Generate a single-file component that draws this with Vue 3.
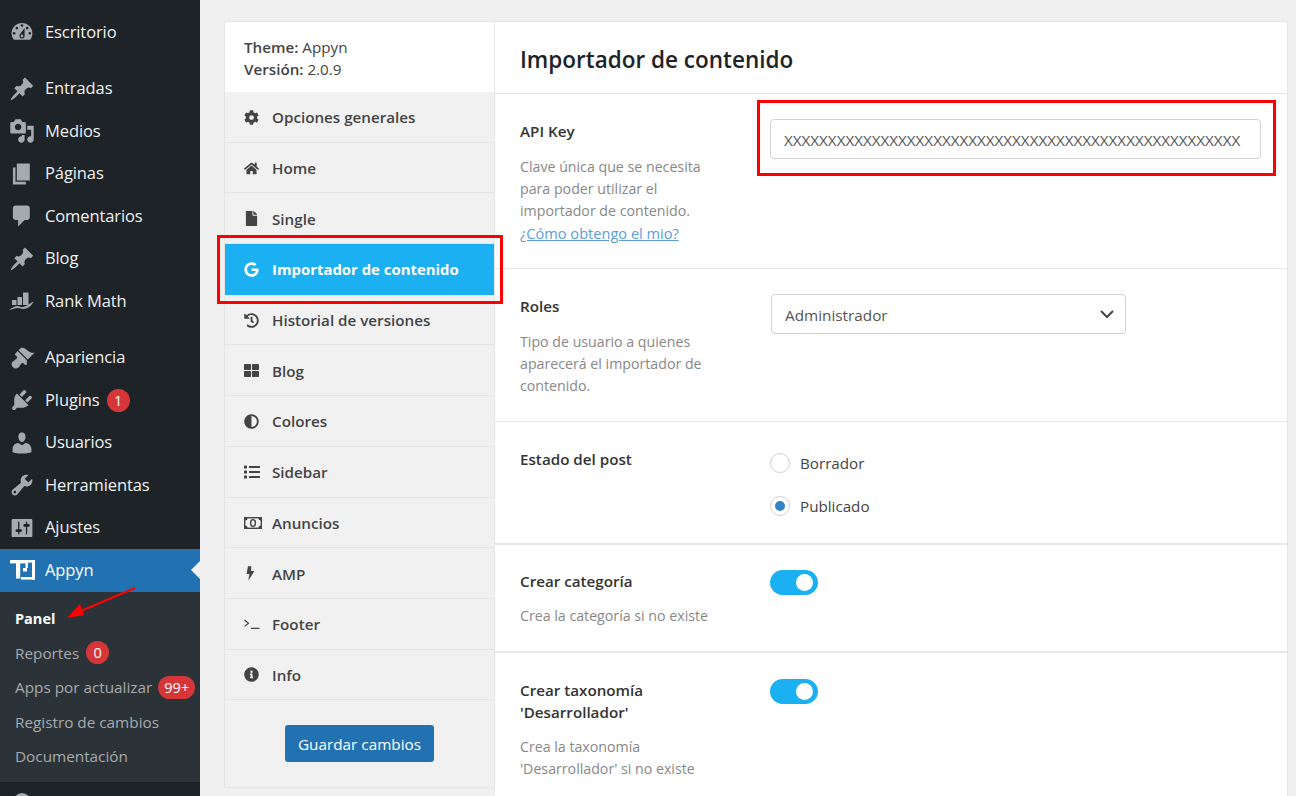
<script setup>
const dash = {
  dashboard: 'M3.76 16h12.48c1.1-1.37 1.76-3.11 1.76-5 0-4.42-3.58-8-8-8s-8 3.58-8 8c0 1.89.66 3.63 1.76 5zM10 4c.55 0 1 .45 1 1s-.45 1-1 1-1-.45-1-1 .45-1 1-1zM6 6c.55 0 1 .45 1 1s-.45 1-1 1-1-.45-1-1 .45-1 1-1zm8 0c.55 0 1 .45 1 1s-.45 1-1 1-1-.45-1-1 .45-1 1-1zm-5.37 5.55L12 7v6c0 1.1-.9 2-2 2s-2-.9-2-2c0-.57.24-1.08.63-1.45zM4 10c.55 0 1 .45 1 1s-.45 1-1 1-1-.45-1-1 .45-1 1-1zm12 0c.55 0 1 .45 1 1s-.45 1-1 1-1-.45-1-1 .45-1 1-1zm-5 3c0-.55-.45-1-1-1s-1 .45-1 1 .45 1 1 1 1-.45 1-1z',
  pin: 'M10.44 3.02l1.82-1.82 6.36 6.35-1.83 1.82c-1.05-.68-2.48-.57-3.41.36l-.75.75c-.92.93-1.04 2.35-.35 3.41l-1.83 1.82-2.41-2.41-2.8 2.79c-.42.42-3.38 2.71-3.8 2.29s1.86-3.39 2.28-3.81l2.79-2.79L4.1 9.36l1.83-1.82c1.05.69 2.48.57 3.4-.36l.75-.75c.93-.92 1.05-2.35.36-3.41z',
  media: 'M13 11V4c0-.55-.45-1-1-1h-1.67L9 1H5L3.67 3H2c-.55 0-1 .45-1 1v7c0 .55.45 1 1 1h10c.55 0 1-.45 1-1zM7 4.5c1.38 0 2.5 1.12 2.5 2.5S8.38 9.5 7 9.5 4.5 8.38 4.5 7 5.62 4.5 7 4.5zM14 6h5v10.5c0 1.38-1.12 2.5-2.5 2.5S14 17.88 14 16.5s1.12-2.5 2.5-2.5c.17 0 .34.02.5.05V9h-3V6zm-4 8.05V13h2v3.5c0 1.38-1.12 2.5-2.5 2.5S7 17.88 7 16.5 8.12 14 9.5 14c.17 0 .34.02.5.05z',
  page: 'M6 15V2h10v13H6zm-1 1h8v2H3V5h2v11z',
  comment: 'M5 2h9c1.1 0 2 .9 2 2v7c0 1.1-.9 2-2 2h-2l-5 5v-5H5c-1.1 0-2-.9-2-2V4c0-1.1.9-2 2-2z',
  brush: 'M14.48 11.06L7.41 3.99l1.5-1.5c.5-.56 2.3-.47 3.51.32 1.21.8 1.43 1.28 2.91 2.1 1.18.64 2.45 1.26 4.45.85zm-.71.71L6.7 4.7 4.93 6.47c-.39.39-.39 1.02 0 1.41l1.06 1.06c.39.39.39 1.03 0 1.42-.6.6-1.43 1.11-2.21 1.69-.35.26-.7.53-1.01.84-1.43 1.43-.67 3.2.29 4.16.96.96 2.73 1.72 4.16.29.31-.31.58-.66.84-1.01.58-.78 1.09-1.61 1.69-2.21.39-.39 1.03-.39 1.42 0l1.06 1.06c.39.39 1.02.39 1.41 0z',
  plugin: 'M13.11 4.36L9.87 7.6 8 5.73l3.24-3.24c.35-.34 1.05-.2 1.56.32.52.51.66 1.21.31 1.55zm-8 1.77l.91-1.12 9.01 9.01-1.19.84c-.71.71-2.63 1.16-3.82 1.16H6.14L4.9 17.26c-.59.59-1.54.59-2.12 0-.59-.58-.59-1.53 0-2.12l1.24-1.24v-3.88c0-1.13.4-3.19 1.09-3.89zm7.26 3.97l3.24-3.24c.34-.35 1.04-.21 1.55.31.52.51.66 1.21.31 1.55l-3.24 3.25z',
  users: 'M10 9.25c-2.27 0-2.73-3.44-2.73-3.44C7 4.02 7.82 2 9.97 2c2.16 0 2.98 2.02 2.71 3.81 0 0-.41 3.44-2.68 3.44zm0 2.57L12.72 10c2.39 0 4.52 2.33 4.52 4.53v2.49s-3.65 1.13-7.24 1.13c-3.65 0-7.24-1.13-7.24-1.13v-2.49c0-2.25 1.94-4.48 4.47-4.48z',
  tools: 'M16.68 9.77c-1.34 1.34-3.3 1.67-4.95.99l-5.41 6.52c-.99.99-2.59.99-3.58 0s-.99-2.59 0-3.57l6.52-5.42c-.68-1.65-.35-3.61.99-4.95 1.28-1.28 3.12-1.62 4.72-1.06l-2.89 2.89 2.82 2.82 2.86-2.87c.53 1.58.18 3.39-1.08 4.65zM3.81 16.21c.4.39 1.04.39 1.43 0 .4-.4.4-1.04 0-1.43-.39-.4-1.03-.4-1.43 0-.39.39-.39 1.03 0 1.43z',
  settings: 'M18 16V4c0-.55-.45-1-1-1H3c-.55 0-1 .45-1 1v12c0 .55.45 1 1 1h14c.55 0 1-.45 1-1zM8 11h1c.55 0 1 .45 1 1s-.45 1-1 1H8v1.5c0 .28-.22.5-.5.5s-.5-.22-.5-.5V13H6c-.55 0-1-.45-1-1s.45-1 1-1h1V5.5c0-.28.22-.5.5-.5s.5.22.5.5V11zm5-2h-1c-.55 0-1-.45-1-1s.45-1 1-1h1V5.5c0-.28.22-.5.5-.5s.5.22.5.5V7h1c.55 0 1 .45 1 1s-.45 1-1 1h-1v5.5c0 .28-.22.5-.5.5s-.5-.22-.5-.5V9z'
}

const menuGroups = [
  [{ label: 'Escritorio', icon: dash.dashboard }],
  [
    { label: 'Entradas', icon: dash.pin },
    { label: 'Medios', icon: dash.media },
    { label: 'Páginas', icon: dash.page },
    { label: 'Comentarios', icon: dash.comment },
    { label: 'Blog', icon: dash.pin },
    { label: 'Rank Math', rank: true }
  ],
  [
    { label: 'Apariencia', icon: dash.brush },
    { label: 'Plugins', icon: dash.plugin, badge: '1' },
    { label: 'Usuarios', icon: dash.users },
    { label: 'Herramientas', icon: dash.tools },
    { label: 'Ajustes', icon: dash.settings }
  ]
]

const submenu = [
  { label: 'Panel', current: true },
  { label: 'Reportes', badge: '0' },
  { label: 'Apps por actualizar', badge: '99+' },
  { label: 'Registro de cambios' },
  { label: 'Documentación' }
]

const tabs = [
  { label: 'Opciones generales', vb: '0 0 512 512', d: 'M487.4 315.7l-42.6-24.6c4.3-23.2 4.3-47 0-70.2l42.6-24.6c4.9-2.8 7.1-8.6 5.5-14-11.1-35.6-30-67.8-54.7-94.6-3.8-4.1-10-5.1-14.8-2.3L380.8 110c-17.9-15.4-38.5-27.3-60.8-35.1V25.8c0-5.6-3.9-10.5-9.4-11.7-36.7-8.2-74.3-7.8-109.2 0-5.5 1.2-9.4 6.1-9.4 11.7V75c-22.2 7.9-42.8 19.8-60.8 35.1L88.7 85.5c-4.9-2.8-11-1.9-14.8 2.3-24.7 26.7-43.6 58.9-54.7 94.6-1.7 5.4.6 11.2 5.5 14L67.3 221c-4.3 23.2-4.3 47 0 70.2l-42.6 24.6c-4.9 2.8-7.1 8.6-5.5 14 11.1 35.6 30 67.8 54.7 94.6 3.8 4.1 10 5.1 14.8 2.3l42.6-24.6c17.9 15.4 38.5 27.3 60.8 35.1v49.2c0 5.6 3.9 10.5 9.4 11.7 36.7 8.2 74.3 7.8 109.2 0 5.5-1.2 9.4-6.1 9.4-11.7v-49.2c22.2-7.9 42.8-19.8 60.8-35.1l42.6 24.6c4.9 2.8 11 1.9 14.8-2.3 24.7-26.7 43.6-58.9 54.7-94.6 1.5-5.5-.7-11.3-5.6-14.1zM256 336c-44.1 0-80-35.9-80-80s35.9-80 80-80 80 35.9 80 80-35.9 80-80 80z' },
  { label: 'Home', vb: '0 0 576 512', d: 'M280.37 148.26L96 300.11V464a16 16 0 0 0 16 16l112.06-.29a16 16 0 0 0 15.92-16V368a16 16 0 0 1 16-16h64a16 16 0 0 1 16 16v95.64a16 16 0 0 0 16 16.05L464 480a16 16 0 0 0 16-16V300L295.67 148.26a12.19 12.19 0 0 0-15.3 0zM571.6 251.47L488 182.56V44.05a12 12 0 0 0-12-12h-56a12 12 0 0 0-12 12v72.61L318.47 43a48 48 0 0 0-61 0L4.34 251.47a12 12 0 0 0-1.6 16.9l25.5 31A12 12 0 0 0 45.15 301l235.22-193.74a12.19 12.19 0 0 1 15.3 0L530.9 301a12 12 0 0 0 16.9-1.6l25.5-31a12 12 0 0 0-1.7-16.93z' },
  { label: 'Single', vb: '0 0 384 512', d: 'M224 136V0H24C10.7 0 0 10.7 0 24v464c0 13.3 10.7 24 24 24h336c13.3 0 24-10.7 24-24V160H248c-13.2 0-24-10.8-24-24zm160-14.1v6.1H256V0h6.1c6.4 0 12.5 2.5 17 7l97.9 98c4.5 4.5 7 10.6 7 16.9z' },
  { label: 'Importador de contenido', active: true, vb: '0 0 488 512', d: 'M488 261.8C488 403.3 391.1 504 248 504 110.8 504 0 393.2 0 256S110.8 8 248 8c66.8 0 123 24.5 166.3 64.9l-67.5 64.9C258.5 52.6 94.3 116.6 94.3 256c0 86.5 69.1 156.6 153.7 156.6 98.2 0 135-70.4 140.8-106.9H248v-85.3h236.1c2.3 12.7 3.9 24.9 3.9 41.4z' },
  { label: 'Historial de versiones', vb: '0 0 512 512', d: 'M504 255.531c.253 136.64-111.18 248.372-247.82 248.468-59.015.042-113.223-20.53-155.822-54.911-11.077-8.94-11.905-25.541-1.839-35.607l11.267-11.267c8.609-8.609 22.353-9.551 31.891-1.984C173.062 425.135 212.781 440 256 440c101.705 0 184-82.311 184-184 0-101.705-82.311-184-184-184-48.814 0-93.149 18.969-126.068 49.932l50.754 50.754c10.08 10.08 2.941 27.314-11.313 27.314H24c-8.837 0-16-7.163-16-16V38.627c0-14.254 17.234-21.393 27.314-11.314l49.372 49.372C129.209 34.136 189.552 8 256 8c136.81 0 247.747 110.78 248 247.531zm-180.912 78.784l9.823-12.63c8.138-10.463 6.253-25.542-4.21-33.679L288 256.349V152c0-13.255-10.745-24-24-24h-16c-13.255 0-24 10.745-24 24v135.651l65.409 50.874c10.463 8.137 25.541 6.253 33.679-4.21z' },
  { label: 'Blog', vb: '0 0 512 512', d: 'M296 32h192c13.255 0 24 10.745 24 24v160c0 13.255-10.745 24-24 24H296c-13.255 0-24-10.745-24-24V56c0-13.255 10.745-24 24-24zm-80 0H24C10.745 32 0 42.745 0 56v160c0 13.255 10.745 24 24 24h192c13.255 0 24-10.745 24-24V56c0-13.255-10.745-24-24-24zM0 296v160c0 13.255 10.745 24 24 24h192c13.255 0 24-10.745 24-24V296c0-13.255-10.745-24-24-24H24c-13.255 0-24 10.745-24 24zm296 184h192c13.255 0 24-10.745 24-24V296c0-13.255-10.745-24-24-24H296c-13.255 0-24 10.745-24 24v160c0 13.255 10.745 24 24 24z' },
  { label: 'Colores', vb: '0 0 512 512', d: 'M8 256c0 136.966 111.033 248 248 248s248-111.034 248-248S392.966 8 256 8 8 119.033 8 256zm248 184V72c101.705 0 184 82.311 184 184 0 101.705-82.311 184-184 184z' },
  { label: 'Sidebar', vb: '0 0 512 512', d: 'M80 368H16a16 16 0 0 0-16 16v64a16 16 0 0 0 16 16h64a16 16 0 0 0 16-16v-64a16 16 0 0 0-16-16zm0-320H16A16 16 0 0 0 0 64v64a16 16 0 0 0 16 16h64a16 16 0 0 0 16-16V64a16 16 0 0 0-16-16zm0 160H16a16 16 0 0 0-16 16v64a16 16 0 0 0 16 16h64a16 16 0 0 0 16-16v-64a16 16 0 0 0-16-16zm416 176H176a16 16 0 0 0-16 16v32a16 16 0 0 0 16 16h320a16 16 0 0 0 16-16v-32a16 16 0 0 0-16-16zm0-320H176a16 16 0 0 0-16 16v32a16 16 0 0 0 16 16h320a16 16 0 0 0 16-16V80a16 16 0 0 0-16-16zm0 160H176a16 16 0 0 0-16 16v32a16 16 0 0 0 16 16h320a16 16 0 0 0 16-16v-32a16 16 0 0 0-16-16z', wide: true },
  { label: 'Anuncios', money: true },
  { label: 'AMP', vb: '0 0 320 512', d: 'M190 0L70 0 20 270h100L80 512 300 170H180z', narrow: true },
  { label: 'Footer', terminal: true },
  { label: 'Info', vb: '0 0 512 512', d: 'M256 8C119.043 8 8 119.083 8 256c0 136.997 111.043 248 248 248s248-111.003 248-248C504 119.083 392.957 8 256 8zm0 110c23.196 0 42 18.804 42 42s-18.804 42-42 42-42-18.804-42-42 18.804-42 42-42zm56 254c0 6.627-5.373 12-12 12h-88c-6.627 0-12-5.373-12-12v-24c0-6.627 5.373-12 12-12h12v-64h-12c-6.627 0-12-5.373-12-12v-24c0-6.627 5.373-12 12-12h64c6.627 0 12 5.373 12 12v100h12c6.627 0 12 5.373 12 12v24z' }
]

const apiKey = 'X'.repeat(52)
</script>

<template>
  <div class="page">
    <aside class="wpmenu">
      <ul v-for="(group, gi) in menuGroups" :key="gi" class="group">
        <li v-for="item in group" :key="item.label" class="item">
          <span class="slot">
            <svg v-if="item.rank" width="26" height="20" viewBox="0 0 26 20" fill="#a7aaad">
              <rect x="3" y="9" width="4.500" height="5" />
              <rect x="8.500" y="6" width="4.500" height="8" />
              <rect x="14" y="1.500" width="5.500" height="12.500" />
              <path d="M0 18.500c3-1 5-3.600 8-3.600 2.500 0 3.500 1.400 6 1.100 3.500-.4 6-3 10.500-5.500-1.500 4-5.500 7.400-10 7.400-2.500 0-3.500-1-6-1-3 0-5.500 2-8.500 1.600z" />
            </svg>
            <svg v-else width="26" height="26" viewBox="0 0 20 20" fill="#a7aaad"><path :d="item.icon" /></svg>
          </span>
          <span class="item-label">{{ item.label }}</span>
          <span v-if="item.badge" class="badge">{{ item.badge }}</span>
        </li>
      </ul>
      <div class="item current">
        <span class="slot">
          <svg width="26" height="21" viewBox="0 0 26 21" fill="#fff">
            <rect x="1" y="0" width="25" height="2.600" />
            <rect x="1" y="0" width="16" height="3.400" />
            <rect x="7" y="0" width="4.200" height="18.500" />
            <rect x="16.500" y="0" width="2.400" height="8" />
            <rect x="23" y="0" width="3" height="19.500" />
            <rect x="12" y="17" width="14" height="2.600" />
            <rect x="14" y="8" width="4" height="3.500" />
          </svg>
        </span>
        <span class="item-label">Appyn</span>
        <span class="notch"></span>
      </div>
      <ul class="submenu">
        <li v-for="s in submenu" :key="s.label" class="subitem" :class="{ on: s.current }">
          <span>{{ s.label }}</span>
          <span v-if="s.badge" class="badge" :class="{ wide: s.badge.length > 1 }">{{ s.badge }}</span>
        </li>
      </ul>
      <div class="tail"><span class="tail-dot"></span></div>
    </aside>

    <main class="content">
      <div class="card">
        <nav class="tabs">
          <div class="theme">
            <div><b>Theme:</b> Appyn</div>
            <div><b>Versión:</b> 2.0.9</div>
          </div>
          <div v-for="t in tabs" :key="t.label" class="tab" :class="{ active: t.active }">
            <span class="tab-icon">
              <svg v-if="t.money" width="18" height="12" viewBox="0 0 18 12">
                <rect x="0.700" y="0.700" width="16.600" height="10.600" fill="none" stroke="currentColor" stroke-width="1.400" />
                <path d="M1 1h2.500a2.500 2.500 0 0 1-2.500 2.500zM17 1h-2.500a2.500 2.500 0 0 0 2.500 2.500zM1 11h2.500a2.500 2.500 0 0 0-2.500-2.500zM17 11h-2.500a2.500 2.500 0 0 1 2.500-2.500z" fill="currentColor" />
                <ellipse cx="9" cy="6" rx="2.400" ry="3.400" fill="none" stroke="currentColor" stroke-width="1.400" />
              </svg>
              <svg v-else-if="t.terminal" width="16" height="10" viewBox="0 0 16 10" fill="none" stroke="currentColor" stroke-width="1.200">
                <path d="M0.500 1l4 3.200-4 3.200M7 9.300h8.500" />
              </svg>
              <svg v-else class="fa" :class="{ narrow: t.narrow, wide: t.wide }" :viewBox="t.vb" fill="currentColor"><path :d="t.d" /></svg>
            </span>
            <span class="tab-label">{{ t.label }}</span>
          </div>
          <div class="save"><button class="btn" type="button">Guardar cambios</button></div>
        </nav>

        <section class="panel">
          <h1 class="title">Importador de contenido</h1>

          <div class="row">
            <div class="info">
              <h3>API Key</h3>
              <p>Clave única que se necesita para poder utilizar el importador de contenido. <a href="#">¿Cómo obtengo el mio?</a></p>
            </div>
            <div class="field">
              <input class="input" type="text" :value="apiKey" />
            </div>
          </div>

          <div class="row row-roles">
            <div class="info">
              <h3>Roles</h3>
              <p>Tipo de usuario a quienes aparecerá el importador de contenido.</p>
            </div>
            <div class="field">
              <div class="select">
                <span class="select-value">Administrador</span>
                <svg width="14" height="9" viewBox="0 0 14 9" fill="none" stroke="#444" stroke-width="2"><path d="M1 1l6 6 6-6" /></svg>
              </div>
            </div>
          </div>

          <div class="row thick">
            <div class="info">
              <h3>Estado del post</h3>
            </div>
            <div class="field radios">
              <label class="radio"><span class="dot"></span>Borrador</label>
              <label class="radio"><span class="dot on"></span>Publicado</label>
            </div>
          </div>

          <div class="row thick switch compact">
            <div class="info">
              <h3>Crear categoría</h3>
              <p>Crea la categoría si no existe</p>
            </div>
            <div class="field"><span class="toggle"><span class="knob"></span></span></div>
          </div>

          <div class="row switch">
            <div class="info">
              <h3>Crear taxonomía 'Desarrollador'</h3>
              <p>Crea la taxonomía 'Desarrollador' si no existe</p>
            </div>
            <div class="field"><span class="toggle"><span class="knob"></span></span></div>
          </div>
        </section>
      </div>
    </main>

    <div class="mark mark-api"></div>
    <div class="mark mark-tab"></div>
    <svg class="arrow" width="80" height="40" viewBox="0 0 80 40">
      <path d="M75 1L16 26" stroke="#f00" stroke-width="2" fill="none" />
      <path d="M7 31l13-14 4 11z" fill="#f00" />
    </svg>
  </div>
</template>

<style>
html, body { margin: 0; background: #f0f0f1; }
</style>

<style scoped>
.page {
  position: relative;
  display: flex;
  height: 796px;
  overflow: hidden;
  background: #f0f0f1;
  font-family: "Open Sans", "Noto Sans", sans-serif;
  color: #444;
}
ul { list-style: none; margin: 0; padding: 0; }

.wpmenu {
  flex: 0 0 200px;
  display: flex;
  flex-direction: column;
  padding-top: 11px;
  box-sizing: border-box;
  background: #1d2327;
}
.group { margin-bottom: 14px; }
.group:nth-of-type(3) { margin-bottom: 0; }
.item {
  position: relative;
  display: flex;
  align-items: center;
  height: 42.500px;
  font-size: 16.500px;
  letter-spacing: -0.100px;
  color: #f0f0f1;
}
.item-label { padding-bottom: 2px; }
.slot {
  flex: 0 0 45px;
  box-sizing: border-box;
  padding-right: 1px;
  display: flex;
  justify-content: center;
  align-items: center;
}
.current { background: #2271b1; color: #fff; }
.notch {
  position: absolute;
  right: 0;
  top: 12px;
  border: 9px solid transparent;
  border-right-color: #f0f0f1;
  border-left-width: 0;
}
.badge {
  display: inline-flex;
  align-items: center;
  justify-content: center;
  min-width: 23px;
  height: 23px;
  box-sizing: border-box;
  border-radius: 12px;
  margin-left: 7px;
  background: #d63638;
  color: #fff;
  font-size: 14.500px;
  font-weight: 400;
  letter-spacing: 0;
}
.badge.wide { width: 37px; margin-left: 6px; }
.submenu {
  background: #2c3338;
  padding: 10px 0 8px;
}
.subitem {
  display: flex;
  align-items: center;
  height: 34.500px;
  box-sizing: border-box;
  padding: 0 0 1px 15px;
  font-size: 15.300px;
  color: #a7aaad;
  white-space: nowrap;
}
.subitem.on { color: #fff; font-weight: 700; font-size: 14.500px; }
.tail { flex: 1; position: relative; overflow: hidden; }
.tail-dot {
  position: absolute;
  left: 13px;
  top: 11px;
  width: 18px;
  height: 18px;
  border-radius: 50%;
  background: #a7aaad;
}

.content { flex: 1; padding: 21px 8px 0 24px; min-width: 0; }
.card { display: flex; align-items: flex-start; }
.tabs {
  flex: 0 0 271px;
  box-sizing: border-box;
  border: 1px solid #e5e5e5;
  background: #f1f1f1;
  font-size: 15.200px;
  font-weight: 600;
  height: 767px;
}
.theme {
  height: 70px;
  box-sizing: border-box;
  padding: 14px 19px;
  background: #fff;
  line-height: 22px;
  font-weight: 400;
}
.theme b { font-weight: 600; }
.tab {
  display: flex;
  align-items: center;
  height: 50.700px;
  box-sizing: border-box;
  border-bottom: 1px solid #e5e5e5;
  color: #444;
}
.tab-label { padding-top: 1px; }
.tab.active {
  background: #1ab0f1;
  color: #fff;
  border-bottom-color: #1ab0f1;
  font-size: 14.900px;
  font-weight: 700;
}
.tab-icon {
  flex: 0 0 47px;
  box-sizing: border-box;
  padding: 1px 0 0 19px;
  display: flex;
  align-items: center;
}
.fa { width: 15px; height: 15px; }
.fa.wide { width: 16px; height: 16px; }
.fa.narrow { width: 9px; margin-left: 2px; }
.save { display: flex; justify-content: center; padding-top: 25px; }
.btn {
  width: 149px;
  height: 37px;
  border: 0;
  border-radius: 3px;
  background: #2271b1;
  color: #fff;
  font-family: inherit;
  font-size: 15.300px;
  font-weight: 400;
}

.panel {
  flex: 1;
  min-width: 0;
  background: #fff;
  border-top: 1px solid #e5e5e5;
  border-right: 1px solid #e5e5e5;
}
.title {
  margin: 0;
  height: 72px;
  box-sizing: border-box;
  padding-left: 25px;
  border-bottom: 1px solid #e5e5e5;
  font-size: 22.500px;
  line-height: 75px;
  font-weight: 600;
  color: #1d2327;
}
.row {
  display: flex;
  padding: 26px 25px 23px;
  border-bottom: 1px solid #e8e8e8;
}
.row.thick { border-bottom-width: 2px; }
.row-roles { padding-bottom: 24px; }
.info { flex: 0 0 250px; box-sizing: border-box; padding-right: 50px; }
.info h3 {
  margin: 0;
  font-size: 15.200px;
  line-height: 22px;
  font-weight: 600;
  color: #333;
}
.info p {
  margin: 14px 0 0;
  font-size: 14.200px;
  line-height: 22px;
  color: #888;
}
.row.switch .info p { margin-top: 13px; }
.row.compact { padding: 25px 25px 24px; }
.info a { color: #5b9dd9; text-decoration: underline; font-size: 14.600px; }
.field { flex: 1; min-width: 0; margin-top: -1px; }
.row.switch .field { margin-top: 0; }
.input {
  display: block;
  width: 491px;
  height: 40px;
  box-sizing: border-box;
  padding: 2px 13px 0;
  border: 1px solid #d0d0d6;
  border-radius: 4px;
  background: #fff;
  font-family: inherit;
  font-size: 15.200px;
  color: #555;
  outline: none;
}
.select {
  display: flex;
  align-items: center;
  justify-content: space-between;
  width: 355px;
  height: 40px;
  margin-left: 1px;
  box-sizing: border-box;
  padding: 0 11px 0 13px;
  border: 1px solid #d0d0d6;
  border-radius: 4px;
  font-size: 15.300px;
  color: #555;
}
.select-value { padding-top: 2px; }
.field.radios { margin-top: -6.500px; margin-bottom: -7.500px; }
.radio {
  display: flex;
  align-items: center;
  height: 43px;
  font-size: 15.200px;
  color: #444;
}
.dot {
  position: relative;
  width: 20px;
  height: 20px;
  box-sizing: border-box;
  margin-right: 10px;
  border: 1px solid #d0d0d6;
  border-radius: 50%;
  background: #fff;
}
.dot.on::after {
  content: "";
  position: absolute;
  left: 4px;
  top: 4px;
  width: 10px;
  height: 10px;
  border-radius: 50%;
  background: #3582c4;
}
.toggle {
  position: relative;
  display: block;
  width: 48px;
  height: 25px;
  border-radius: 13px;
  background: #1ab0f1;
}
.knob {
  position: absolute;
  right: 5px;
  top: 4px;
  width: 17px;
  height: 17px;
  border-radius: 50%;
  background: #fff;
}

.mark {
  position: absolute;
  box-sizing: border-box;
  border: 3px solid #f00;
  pointer-events: none;
}
.mark-api { left: 757px; top: 100px; width: 519px; height: 76px; }
.mark-tab { left: 217px; top: 235px; width: 286px; height: 69px; }
.arrow { position: absolute; left: 60px; top: 587px; }
</style>
